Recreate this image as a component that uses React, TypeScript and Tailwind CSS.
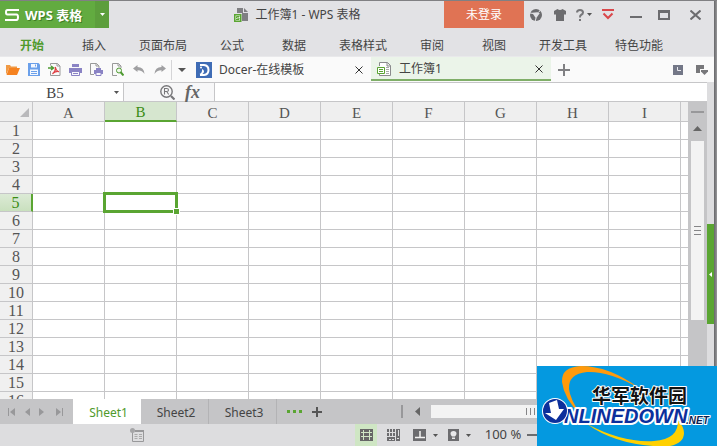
import type { ReactNode } from "react";
import clsx from "clsx";

const MENUS = ["开始", "插入", "页面布局", "公式", "数据", "表格样式", "审阅", "视图", "开发工具", "特色功能"];
const COLUMNS = ["A", "B", "C", "D", "E", "F", "G", "H", "I", "J", "K", "L"];
const ROWS = Array.from({ length: 30 }, (_, i) => i + 1);
const SHEETS = ["Sheet1", "Sheet2", "Sheet3"];
const ACTIVE = { column: "B", row: 5 };

interface IconButtonProps {
  label: string;
  className?: string;
  children: ReactNode;
}

function IconButton({ label, className, children }: IconButtonProps) {
  return (
    <button
      type="button"
      aria-label={label}
      className={clsx("flex shrink-0 items-center justify-center", className)}
    >
      {children}
    </button>
  );
}

function Caret({ className = "fill-[#555]" }: { className?: string }) {
  return (
    <svg width="5" height="3" viewBox="0 0 5 3" className={className}>
      <path d="M0 0h5L2.500 3z" />
    </svg>
  );
}

function CloseX() {
  return (
    <svg width="8" height="8" viewBox="0 0 8 8" stroke="#333" strokeWidth="1">
      <path d="M.5.5l7 7M7.500.5l-7 7" />
    </svg>
  );
}

function TitleBar() {
  return (
    <header className="flex h-[27px] shrink-0 items-stretch">
      <button type="button" className="flex w-[95px] shrink-0 items-center gap-1.5 bg-[#62ab40] pl-[5px] text-white">
        <svg width="14" height="12" viewBox="0 0 14 12" fill="none" stroke="#fff" strokeWidth="2">
          <path d="M14 1H2.500Q1 1 1 3.200T2.500 5.500h9Q13 5.500 13 8.200T11.500 11H0" />
        </svg>
        <span className="text-[13px] leading-4 font-bold whitespace-nowrap [text-shadow:1px_1px_0_#3f7d25]">
          WPS 表格
        </span>
      </button>
      <IconButton label="应用菜单" className="w-3.5 bg-[#5c9e3c]">
        <Caret className="fill-white" />
      </IconButton>
      <h1 className="flex min-w-0 flex-1 items-center justify-center gap-[7px] pl-[42px] text-xs whitespace-nowrap">
        <svg width="14" height="14" viewBox="0 0 14 14">
          <path d="M3 0h6v5h5v8H8V5H3z" fill="#808083" />
          <path d="M10 0l4 4h-4z" fill="#808083" />
          <path d="M.75 6.750h6v6.500h-6z" fill="#e9f3e4" stroke="#5aa532" strokeWidth="1.500" />
          <path d="M5.500 8.500H2.500V10h2.500v1.500H2" fill="none" stroke="#5aa532" />
        </svg>
        工作簿1 - WPS 表格
      </h1>
      <button type="button" className="w-20 shrink-0 bg-[#e07354] text-xs text-white">
        未登录
      </button>
      <IconButton label="云服务" className="w-6">
        <svg width="12" height="12" viewBox="0 0 12 12">
          <circle cx="6" cy="6" r="6" fill="#6c6c6f" />
          <path d="M2.200 3.800l5.300-.5 2.200 1L6 9.500z" fill="#e2e2e5" />
          <path d="M0 4l3 .5M6 9l-.7 3M8.500 3.500L10.500 1" stroke="#e2e2e5" />
        </svg>
      </IconButton>
      <IconButton label="皮肤" className="w-6">
        <svg width="12" height="12" viewBox="0 0 12 12" fill="#6c6c6f">
          <path d="M0 2l3.500-2Q6 2 8.500 0L12 2v3.500h-2V12H2V5.500H0z" />
        </svg>
      </IconButton>
      <IconButton label="帮助" className="w-6 gap-[3px]">
        <svg width="8" height="12" viewBox="0 0 8 12" fill="none" stroke="#77777a" strokeWidth="2">
          <path d="M1 3.500Q1 1 4 1t3 2.500Q7 5 5 6 4 6.500 4 8.500M4 10v2" />
        </svg>
        <Caret />
      </IconButton>
      <IconButton label="收起功能区" className="w-6">
        <svg width="12" height="11" viewBox="0 0 12 11" fill="none" stroke="#d9484c" strokeWidth="2">
          <path d="M0 1h12M1.500 4.500L6 9l4.500-4.500" />
        </svg>
      </IconButton>
      <IconButton label="最小化" className="w-8 pt-1">
        <svg width="12" height="2" viewBox="0 0 12 2">
          <path d="M0 0h12v2H0z" fill="#6c6c6f" />
        </svg>
      </IconButton>
      <IconButton label="最大化" className="w-6">
        <svg width="12" height="10" viewBox="0 0 12 10">
          <path d="M0 0h12v10H0zM2 3v5h8V3z" fill="#6c6c6f" fillRule="evenodd" />
        </svg>
      </IconButton>
      <IconButton label="关闭" className="w-[38px]">
        <svg width="11" height="10" viewBox="0 0 11 10" stroke="#6c6c6f" strokeWidth="2">
          <path d="M.5.5l10 9M10.500.5l-10 9" />
        </svg>
      </IconButton>
    </header>
  );
}

function MenuBar() {
  return (
    <nav className="flex h-[29px] shrink-0 items-center overflow-hidden border-b border-[#e9e9eb] pt-2 pl-px">
      {MENUS.map((menu, index) => (
        <button
          key={menu}
          type="button"
          className={clsx(
            "min-w-[62px] shrink-0 px-3.5 text-xs",
            index === 0 && "font-bold text-[#4f9a2c]"
          )}
        >
          {menu}
        </button>
      ))}
    </nav>
  );
}

function QuickTools() {
  return (
    <div className="flex shrink-0 items-center pl-0.5">
      <IconButton label="打开" className="w-[21px]">
        <svg width="14" height="11" viewBox="0 0 14 11">
          <path d="M0 10V1h4l1 1.500h6V4H3L1 9z" fill="#f09a45" />
          <path d="M3 4h11l-3 7H.5z" fill="#f58220" />
        </svg>
      </IconButton>
      <IconButton label="保存" className="w-[21px]">
        <svg width="12" height="13" viewBox="0 0 12 13">
          <path d="M0 0h10.500L12 1.500V13H0z" fill="#6ba0ea" />
          <path d="M3 1h6v3.500H3zM2 6.500h8V12H2z" fill="#f4f8fe" />
          <path d="M3 8.500h6M3 10.500h6M7.500 1.500v2" stroke="#6ba0ea" />
        </svg>
      </IconButton>
      <IconButton label="输出为PDF" className="w-[21px]">
        <svg width="13" height="13" viewBox="0 0 13 13" fill="none">
          <path d="M2.500 2.500v-2h7l2.500 2.500v9.500H2.500V8M9 .5V3h3" stroke="#999" />
          <path d="M0 5h5M3 3l2.500 2L3 7" stroke="#4f9a32" strokeWidth="1.500" />
          <path d="M7 4q.8 3.500 4 5M7.500 4q.3 4-3 7M4.500 10.500Q8 8 11 8.500" stroke="#df4044" strokeWidth="1.200" />
        </svg>
      </IconButton>
      <IconButton label="打印" className="w-[21px]">
        <svg width="13" height="12" viewBox="0 0 13 12">
          <path d="M3 0h7v3H3zM0 4h13v5H0z" fill="#8a83c4" />
          <path d="M2.500 7.500h8v4h-8z" fill="#f7f7fb" stroke="#8a83c4" />
          <path d="M4 9.500h5" stroke="#8a83c4" />
        </svg>
      </IconButton>
      <IconButton label="打印设置" className="w-[21px]">
        <svg width="13" height="13" viewBox="0 0 13 13">
          <path d="M4 11.500H.5V.5h6L9 3v2M6 .5V3h3" fill="none" stroke="#999" />
          <path d="M6 5h5v2H6zM4 7h9v4H4z" fill="#8a83c4" />
          <path d="M6 9.500h5v3H6z" fill="#f7f7fb" stroke="#8a83c4" />
        </svg>
      </IconButton>
      <IconButton label="打印预览" className="w-[21px]">
        <svg width="12" height="13" viewBox="0 0 12 13" fill="none">
          <path d="M5 12.500H.5V.5h6L9 3v2M6 .5V3h3" stroke="#999" />
          <circle cx="7" cy="7.500" r="2.500" fill="#eef7ea" stroke="#4f9a32" />
          <path d="M8.500 9l3 3.500" stroke="#4f9a32" strokeWidth="2" />
        </svg>
      </IconButton>
      <IconButton label="撤销" className="w-[21px]">
        <svg width="12" height="9" viewBox="0 0 12 9">
          <path d="M0 3.500L4.500 0v2Q11 2 11.500 9 9.500 5.200 4.500 5.200V7z" fill="#a0a0a2" />
        </svg>
      </IconButton>
      <IconButton label="恢复" className="w-[21px]">
        <svg width="12" height="9" viewBox="0 0 12 9">
          <path d="M12 3.500L7.500 0v2Q1 2 .5 9q2-3.800 7-3.800V7z" fill="#a0a0a2" />
        </svg>
      </IconButton>
      <div className="ml-px h-5 w-px bg-[#d5d5d7]" />
      <IconButton label="自定义快速访问" className="w-5">
        <svg width="8" height="4" viewBox="0 0 8 4" fill="#555">
          <path d="M0 0h8L4 4z" />
        </svg>
      </IconButton>
    </div>
  );
}

function DocumentBar() {
  return (
    <div className="flex h-[25px] shrink-0 items-stretch bg-[#fafafa]">
      <QuickTools />
      <div className="flex w-[179px] shrink-0 items-center pr-2 pl-1 text-xs">
        <svg width="16" height="16" viewBox="0 0 16 16" className="mr-[7px] shrink-0">
          <path d="M0 0h16v16H0z" fill="#3f6cb5" />
          <path d="M4 3h4q4.500.5 4.500 5T8 13H4" fill="none" stroke="#fff" strokeWidth="2" />
          <path d="M3.500 12q3-1 2.500-5 3 1.500 1.500 4-1.500 2-4 1z" fill="#fff" />
          <circle cx="5" cy="5.500" r="1" fill="#fff" />
        </svg>
        <a href="#docer" className="flex-1 whitespace-nowrap">Docer-在线模板</a>
        <IconButton label="关闭标签">
          <CloseX />
        </IconButton>
      </div>
      <div className="mb-px flex w-[180px] shrink-0 items-center border-b-2 border-[#7fae68] bg-[#ebf4e9] pt-0.5 pr-2 pl-1.5 text-xs">
        <svg width="14" height="14" viewBox="0 0 14 14" className="mr-2 shrink-0" fill="none">
          <path d="M2.500 4V.5h8l3 3v10h-11V12M10 .5V4h3.500" fill="#fff" stroke="#8b8b8d" />
          <path d="M9 5.500h3M9 7.500h3M9 9.500h3M9 11.500h3" stroke="#aaa" />
          <path d="M.5 5.500h7v6h-7z" fill="#fff" stroke="#5aa532" />
          <path d="M2 7.500h4M2 9.500h4" stroke="#5aa532" />
        </svg>
        <a href="#book" className="flex-1 whitespace-nowrap">工作簿1</a>
        <IconButton label="关闭标签">
          <CloseX />
        </IconButton>
      </div>
      <IconButton label="新建标签" className="w-[26px]">
        <svg width="12" height="12" viewBox="0 0 12 12">
          <path d="M5 0h2v5h5v2H7v5H5V7H0V5h5z" fill="#808083" />
        </svg>
      </IconButton>
      <div className="ml-auto flex items-center">
        <IconButton label="历史" className="w-6">
          <svg width="10" height="10" viewBox="0 0 10 10">
            <path d="M0 0h10v10H0z" fill="#737787" />
            <path d="M4.500 2v3.500H8" fill="none" stroke="#e8e8ee" />
          </svg>
        </IconButton>
        <IconButton label="标签列表" className="w-6">
          <svg width="12" height="10" viewBox="0 0 12 10">
            <path d="M0 0h8v4H4v4H0z" fill="#77777a" />
            <path d="M5 5h7v1.500L8.500 10 5 6.500z" fill="#77777a" />
          </svg>
        </IconButton>
      </div>
    </div>
  );
}

function FormulaBar() {
  return (
    <div className="flex h-5 shrink-0 border-y border-[#c6c6c8] bg-[#fafafa]">
      <div className="flex w-[124px] shrink-0 items-center border-r border-[#c6c6c8] bg-white pr-1">
        <input
          aria-label="名称框"
          defaultValue="B5"
          className="w-full min-w-0 bg-transparent pt-0.5 pr-1 text-center font-['Liberation_Serif',serif] text-[15px] leading-4 text-[#444] outline-none"
        />
        <IconButton label="选择名称">
          <Caret />
        </IconButton>
      </div>
      <div className="flex w-[90px] shrink-0 items-center justify-end gap-2.5 bg-[#f7f7f8] pr-3.5">
        <IconButton label="查找">
          <svg width="15" height="15" viewBox="0 0 15 15" fill="none">
            <circle cx="6.500" cy="6.500" r="5.700" stroke="#77777a" strokeWidth="1.400" />
            <path d="M11 11l3.500 3.500" stroke="#77777a" strokeWidth="2.200" />
            <path d="M4.500 9.500v-6h2.200q1.800 0 1.800 1.500T6.700 6.500H4.500m2.200 0l2 3" stroke="#77777a" strokeWidth="1.100" />
          </svg>
        </IconButton>
        <button
          type="button"
          aria-label="插入函数"
          className="font-['Liberation_Serif',serif] text-lg leading-4 font-bold text-[#666] italic"
        >
          fx
        </button>
      </div>
      <input
        aria-label="编辑栏"
        className="min-w-0 flex-1 border-l border-[#c6c6c8] bg-white px-1 text-xs outline-none"
      />
    </div>
  );
}

function Grid() {
  return (
    <div className="min-w-0 flex-1 overflow-hidden bg-white">
      <table className="w-[897px] table-fixed border-separate border-spacing-0 font-['Liberation_Serif',serif] text-base leading-4 text-[#555]">
        <thead>
          <tr className="h-5">
            <th className="w-[33px] border-r border-b border-[#c6c6c8] bg-[#efefef] p-0">
              <svg width="9" height="9" viewBox="0 0 9 9" className="mt-0.5 ml-5">
                <path d="M9 0v9H0z" fill="#b9b9bb" />
              </svg>
            </th>
            {COLUMNS.map((column) => (
              <th
                key={column}
                scope="col"
                className={clsx(
                  "w-[72px] border-r border-[#c6c6c8] p-0 pt-[3px] text-[15px] leading-[15px] font-normal",
                  column === ACTIVE.column
                    ? "border-b-2 border-b-[#5aa532] bg-[#d6e6cf] text-[#3a8c14]"
                    : "border-b bg-[#efefef]"
                )}
              >
                {column}
              </th>
            ))}
          </tr>
        </thead>
        <tbody>
          {ROWS.map((row) => (
            <tr key={row} className="h-[18px]">
              <th
                scope="row"
                className={clsx(
                  "border-b border-b-[#c6c6c8] p-0 pt-px font-normal",
                  row === ACTIVE.row
                    ? "border-r-2 border-r-[#5aa532] bg-linear-to-t from-[#c9e0be] to-[#dcead6] text-[#3a8c14]"
                    : "border-r border-r-[#c6c6c8] bg-[#f0f0f0]"
                )}
              >
                {row}
              </th>
              {COLUMNS.map((column) => (
                <td key={column} className="relative border-r border-b border-[#c6c6c8] p-0">
                  {row === ACTIVE.row && column === ACTIVE.column && (
                    <span className="absolute -top-0.5 -right-0.5 -bottom-0.5 -left-0.5 z-10 border-3 border-[#5aa532]">
                      <span className="absolute -right-1 -bottom-1 size-[5px] bg-[#5aa532] outline outline-white" />
                    </span>
                  )}
                </td>
              ))}
            </tr>
          ))}
        </tbody>
      </table>
    </div>
  );
}

function VerticalScroll() {
  return (
    <div className="flex w-[19px] shrink-0 flex-col items-center bg-[#c5c5c7] pt-[9px]">
      <div className="h-0.5 w-[13px] bg-[#98989a]" />
      <IconButton label="向上滚动" className="mt-3 h-[7px]">
        <svg width="9" height="5" viewBox="0 0 9 5" fill="#666">
          <path d="M4.500 0L9 5H0z" />
        </svg>
      </IconButton>
      <div className="mt-[9px] flex h-[179px] w-[13px] flex-col items-center justify-center gap-[3px] bg-[#f3f3f3]">
        <div className="h-px w-[7px] bg-[#858587]" />
        <div className="h-px w-[7px] bg-[#858587]" />
        <div className="h-px w-[7px] bg-[#858587]" />
      </div>
    </div>
  );
}

function SheetBar() {
  return (
    <div className="flex h-[25px] shrink-0 items-stretch bg-[#c5c5c7]">
      <div className="flex w-[73px] shrink-0 items-center pl-1">
        <IconButton label="第一张" className="w-4">
          <svg width="8" height="8" viewBox="0 0 8 8" fill="#98989a">
            <path d="M0 0h1v8H0zM7 0v8L2 4z" />
          </svg>
        </IconButton>
        <IconButton label="上一张" className="w-3.5">
          <svg width="5" height="8" viewBox="0 0 5 8" fill="#98989a">
            <path d="M5 0v8L0 4z" />
          </svg>
        </IconButton>
        <IconButton label="下一张" className="w-3.5">
          <svg width="5" height="8" viewBox="0 0 5 8" fill="#98989a">
            <path d="M0 0v8l5-4z" />
          </svg>
        </IconButton>
        <IconButton label="最后一张" className="w-[22px]">
          <svg width="8" height="8" viewBox="0 0 8 8" fill="#98989a">
            <path d="M7 0h1v8H7zM1 0v8l5-4z" />
          </svg>
        </IconButton>
      </div>
      {SHEETS.map((sheet, index) => (
        <button
          key={sheet}
          type="button"
          className={clsx(
            "w-[68px] shrink-0 pt-0.5 pl-[3px] text-xs",
            index === 0 ? "bg-white text-[#4f9a2c]" : "border-r border-[#b3b3b5]"
          )}
        >
          {sheet}
        </button>
      ))}
      <IconButton label="更多工作表" className="w-[34px]">
        <svg width="15" height="3" viewBox="0 0 15 3" fill="#5aa532">
          <path d="M0 0h3v3H0zM6 0h3v3H6zM12 0h3v3h-3z" />
        </svg>
      </IconButton>
      <IconButton label="新建工作表" className="w-3">
        <svg width="10" height="10" viewBox="0 0 10 10" fill="#555">
          <path d="M4 0h2v4h4v2H6v4H4V6H0V4h4z" />
        </svg>
      </IconButton>
      <div className="ml-[78px] flex min-w-0 flex-1 items-center pr-[84px]">
        <div className="h-[13px] w-0.5 shrink-0 bg-[#98989a]" />
        <IconButton label="向左滚动" className="w-7">
          <svg width="5" height="9" viewBox="0 0 5 9" fill="#666">
            <path d="M5 0v9L0 4.500z" />
          </svg>
        </IconButton>
        <div className="flex h-[13px] min-w-0 flex-1 items-center justify-center gap-[3px] bg-[#f3f3f3]">
          <div className="h-[7px] w-px bg-[#858587]" />
          <div className="h-[7px] w-px bg-[#858587]" />
          <div className="h-[7px] w-px bg-[#858587]" />
        </div>
      </div>
    </div>
  );
}

function StatusBar() {
  return (
    <footer className="flex h-[22px] shrink-0 items-stretch bg-[#dddddf] pl-[130px]">
      <IconButton label="宏录制">
        <svg width="14" height="14" viewBox="0 0 14 14">
          <path d="M2.500 3v10.500h11v-11H5" fill="none" stroke="#98989a" />
          <path d="M5 2h9v2H5z" fill="#98989a" />
          <path d="M4.500 6.500h3M9 6.500h3M4.500 8.500h3M9 8.500h3M4.500 10.500h3M9 10.500h3" stroke="#aaa" />
          <circle cx="2.500" cy="2.500" r="2.500" fill="#a5a5a7" />
        </svg>
      </IconButton>
      <div className="ml-auto flex items-stretch pr-[175px]">
        <IconButton label="普通视图" className="w-[22px] bg-[#cfe6c4]">
          <svg width="13" height="12" viewBox="0 0 13 12">
            <path d="M0 0h13v12H0z" fill="#666" />
            <path d="M1 3.500h11M1 7.500h11M3.500 1v10M9.500 1v10" stroke="#cfe6c4" />
          </svg>
        </IconButton>
        <IconButton label="分页预览" className="w-8">
          <svg width="13" height="12" viewBox="0 0 13 12">
            <path d="M0 0h8v7H0zM9 0h4v12H9zM0 8h8v4H0z" fill="#6c6c6f" />
            <path d="M0 3.500h8M2.500 0v7M5.500 0v7M10 9.500h2M2 10.500h2M5 10.500h2M11.500 1v6" stroke="#dddddf" />
          </svg>
        </IconButton>
        <IconButton label="阅读模式" className="ml-px w-[30px] gap-[7px]">
          <svg width="13" height="12" viewBox="0 0 13 12">
            <path d="M0 0h13v12H0z" fill="#6c6c6f" />
            <path d="M7 2v6M2 8.500h10" stroke="#f3f3f3" strokeWidth="1.500" />
          </svg>
          <Caret />
        </IconButton>
        <IconButton label="护眼模式" className="ml-1 w-[30px] gap-[7px]">
          <svg width="11" height="12" viewBox="0 0 11 12">
            <path d="M0 0h11v12H0z" fill="#6c6c6f" />
            <path d="M5.500 2q3 0 3 2.700Q8.500 6 7 7.500H4Q2.500 6 2.500 4.700 2.500 2 5.500 2zM4 8.500h3V10H4z" fill="#e8e8ea" />
          </svg>
          <Caret />
        </IconButton>
        <button type="button" className="ml-2 w-[42px] text-[13px] whitespace-nowrap">
          100 %
        </button>
        <IconButton label="缩小" className="ml-[3px]">
          <svg width="12" height="2" viewBox="0 0 12 2">
            <path d="M0 0h12v2H0z" fill="#6c6c6f" />
          </svg>
        </IconButton>
      </div>
    </footer>
  );
}

function SiteBadge() {
  return (
    <svg
      width="180"
      height="80"
      viewBox="0 0 180 80"
      role="img"
      aria-label="华军软件园 ONLINEDOWN.NET"
      className="absolute right-0 bottom-0 z-20 bg-[#0499e0]"
    >
      <path
        d="M102 22Q72 0 44 0 24 1 25 16 27 33 44 49 33 33 32 23 31 8 50 6 72 5 102 22z"
        fill="#ff9a0c"
      />
      <path
        d="M50 58Q76 77 116 80H133Q147 77 147 67 147 61 141 54 142 73 117 75 86 77 50 58z"
        fill="#ffd000"
      />
      <g strokeLinejoin="round" paintOrder="stroke">
        <text
          x="55"
          y="37"
          fill="#111"
          stroke="#fff"
          strokeWidth="2"
          className="font-['Noto_Sans_CJK_SC',sans-serif] text-[19px] font-bold"
        >
          华军软件园
        </text>
        <text
          x="27"
          y="57"
          fill="#0c2f9c"
          stroke="#fff"
          strokeWidth="4"
          className="font-['Liberation_Sans',sans-serif] text-[20px] font-bold italic"
        >
          NLINEDOWN
        </text>
        <ellipse cx="18" cy="45" rx="12" ry="12" fill="#0c2f9c" stroke="#fff" strokeWidth="2" />
        <path d="M12 37l8-3 2 9h5l-8 11-11-7h6z" fill="#fff" />
        <text
          x="149"
          y="58"
          fill="#0c2350"
          stroke="#fff"
          strokeWidth="2"
          className="font-['Liberation_Sans',sans-serif] text-[10px] font-bold italic"
        >
          .NET
        </text>
      </g>
    </svg>
  );
}

export default function App() {
  return (
    <div className="relative flex h-screen overflow-hidden bg-[#808083] pt-px font-['Noto_Sans','Noto_Sans_CJK_SC',sans-serif] text-[#444]">
      <div className="flex min-w-0 flex-1 flex-col bg-[#e2e2e5]">
        <TitleBar />
        <MenuBar />
        <DocumentBar />
        <div className="flex min-h-0 flex-1">
          <main className="flex min-w-0 flex-1 flex-col">
            <FormulaBar />
            <div className="flex min-h-0 flex-1">
              <Grid />
              <VerticalScroll />
            </div>
          </main>
          {/* collapsed task pane */}
          <aside className="w-[7px] shrink-0 bg-[#dddddf] pt-[142px]">
            <IconButton label="展开任务窗格" className="h-[100px] w-full bg-[#5aa532]">
              <svg width="3" height="5" viewBox="0 0 3 5" fill="#fff">
                <path d="M3 0v5L0 2.500z" />
              </svg>
            </IconButton>
          </aside>
        </div>
        <SheetBar />
        <StatusBar />
      </div>
      <div className="w-[3px] shrink-0 bg-linear-to-r from-[#666669] to-[#98989a]" />
      <SiteBadge />
    </div>
  );
}
